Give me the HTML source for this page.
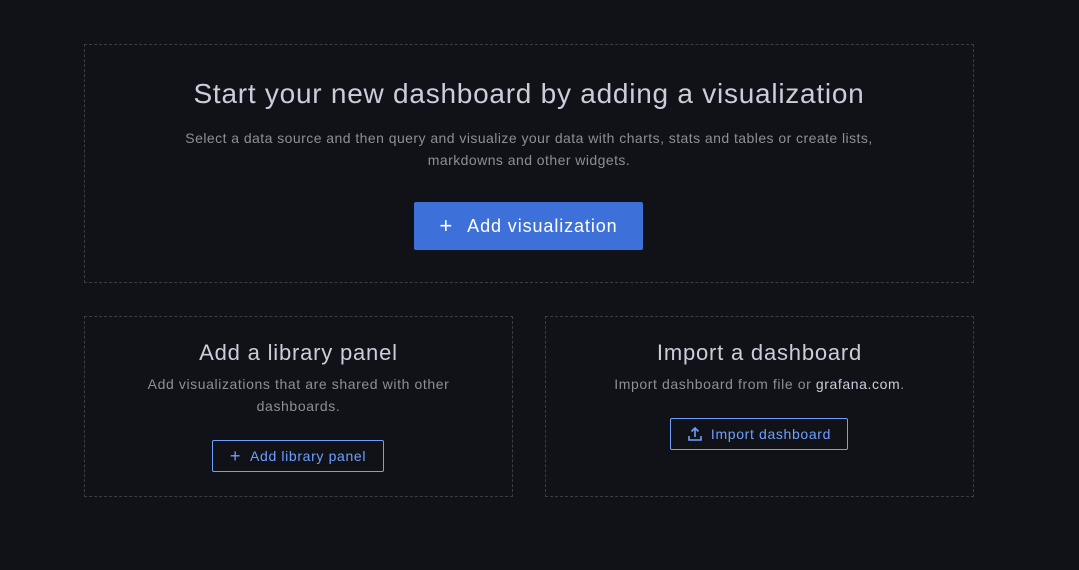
<!DOCTYPE html>
<html><head><style>
body{margin:0;width:1079px;height:570px;background:#111217;font-family:"Liberation Sans",sans-serif;position:relative;overflow:hidden}
.box{position:absolute;border:1px dashed #3c3d44;box-sizing:border-box;text-align:center}
h1{margin:0;font-weight:400;color:#ccccdc;white-space:nowrap}
p{margin:0;color:#8e8e98;font-size:14px;line-height:22px;letter-spacing:0.6px}
.btn{position:absolute;box-sizing:border-box;display:flex;align-items:center;justify-content:center;white-space:nowrap}
</style></head><body>
<div class="box" style="left:84px;top:44px;width:890px;height:239px">
<h1 style="font-size:28px;letter-spacing:0.75px;position:absolute;top:33px;width:100%">Start your new dashboard by adding a visualization</h1>
<p style="position:absolute;top:82px;left:85px;right:85px;letter-spacing:0.45px">Select a data source and then query and visualize your data with charts, stats and tables or create lists, markdowns and other widgets.</p>
<div class="btn" style="left:329px;top:157px;width:229px;height:48px;background:#3d71d9;border-radius:2px;color:#fff;font-size:18px;letter-spacing:0.9px"><span style="font-size:22px;margin-right:14px">+</span>Add visualization</div>
</div>
<div class="box" style="left:84px;top:316px;width:429px;height:181px">
<h1 style="font-size:22px;letter-spacing:0.8px;position:absolute;top:23px;width:100%">Add a library panel</h1>
<p style="position:absolute;top:56px;left:55px;right:55px">Add visualizations that are shared with other dashboards.</p>
<div class="btn" style="left:127px;top:123px;width:172px;height:32px;border:1px solid #6e9fff;border-radius:2px;color:#6e9fff;font-size:14px;letter-spacing:0.65px"><span style="font-size:18px;margin-right:9px">+</span>Add library panel</div>
</div>
<div class="box" style="left:545px;top:316px;width:429px;height:181px">
<h1 style="font-size:22px;letter-spacing:0.8px;position:absolute;top:23px;width:100%">Import a dashboard</h1>
<p style="position:absolute;top:56px;width:100%">Import dashboard from file or <span style="color:#ccccdc">grafana.com</span>.</p>
<div class="btn" style="left:124px;top:101px;width:178px;height:32px;border:1px solid #6e9fff;border-radius:2px;color:#6e9fff;font-size:14px;letter-spacing:0.65px"><svg width="16" height="16" viewBox="0 0 16 16" style="margin-right:8px" fill="none" stroke="#6e9fff" stroke-width="1.6"><path d="M8 11V2M4.5 5.5L8 2l3.5 3.5M2 10v4h12v-4"/></svg>Import dashboard</div>
</div>
</body></html>
